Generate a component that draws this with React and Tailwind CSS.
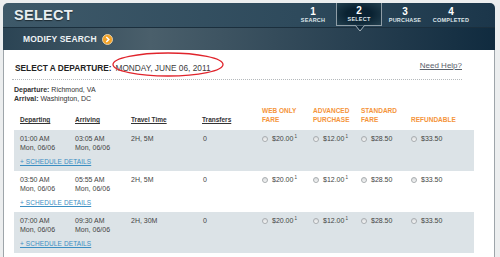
import React from "react";

const rows = [
  { dep: "01:00 AM", arr: "03:05 AM", time: "2H, 5M", shaded: true },
  { dep: "03:50 AM", arr: "05:55 AM", time: "2H, 5M", shaded: false },
  { dep: "07:00 AM", arr: "09:30 AM", time: "2H, 30M", shaded: true },
];

const steps = [
  { n: "1", label: "SEARCH" },
  { n: "2", label: "SELECT", active: true },
  { n: "3", label: "PURCHASE" },
  { n: "4", label: "COMPLETED" },
];

const cols = "grid grid-cols-[55px_56px_71px_60px_51px_48px_50px_1fr]";

const Radio = () => (
  <span className="inline-block w-[6px] h-[6px] rounded-full border border-[#a9adb0] bg-linear-to-b from-[#d9dcde] to-[#f7f7f7] mr-[4px]" />
);

const Price = ({ value, sup }) => (
  <div className="flex items-center h-[9px]">
    <Radio />
    <span>
      {value}
      {sup && <sup className="text-[4.5px] top-[-3px] ml-[1px]">1</sup>}
    </span>
  </div>
);

export default function App() {
  return (
    <div
      className="relative w-[500px] h-[257px] overflow-hidden bg-[#eceeef] pt-[3px] pl-[3px]"
      style={{ fontFamily: '"Liberation Sans", Arial, sans-serif' }}
    >
      <div className="w-[492px]">
        {/* Header */}
        <div className="rounded-t-[5px] overflow-hidden">
          <div className="relative h-[25px] flex items-start justify-between bg-linear-to-r from-[#3e5969] via-[#2e4a5c] via-60% to-[#1b364a] border-b border-[#1b2f3d]">
            <div className="pl-[11px] h-[25px] leading-[25px] text-[14.5px] font-bold text-[#e9eef1] tracking-[0.3px] [text-shadow:0_1px_1px_rgba(0,0,0,0.5)]">
              SELECT
            </div>
            <div className="flex mr-[21px]">
              {steps.map((s) => (
                <div
                  key={s.n}
                  className={
                    s.active
                      ? "relative w-[46px] h-[23px] flex flex-col items-center pt-[3px] border border-t-0 border-[#8f9da6] bg-[radial-gradient(ellipse_at_center,#0a2232_40%,#23404f)]"
                      : "w-[46px] h-[23px] flex flex-col items-center pt-[4px]"
                  }
                >
                  <span className="text-[10px] leading-[10px] font-bold text-white">
                    {s.n}
                  </span>
                  <span className="text-[5.5px] leading-[6px] font-bold text-[#dfe6ea] tracking-[0.2px]">
                    {s.label}
                  </span>
                  {s.active && (
                    <svg
                      className="absolute left-[18px] top-[22px]"
                      width="10"
                      height="8"
                      viewBox="0 0 10 8"
                    >
                      <path d="M0.5 0.5 L5 6 L9.5 0.5 Z" fill="#0d2638" />
                      <path
                        d="M0.5 0.5 L5 6 L9.5 0.5"
                        fill="none"
                        stroke="#aab6bd"
                        strokeWidth="1"
                      />
                    </svg>
                  )}
                </div>
              ))}
            </div>
          </div>
          <div className="h-[22px] flex items-center pl-[20px] bg-linear-to-r from-[#2b4454] via-[#4a5f6b] via-30% to-[#102b3f]">
            <span className="text-[8.5px] font-bold text-[#eef2f4] tracking-[0.2px]">
              MODIFY SEARCH
            </span>
            <svg className="ml-[5px]" width="11" height="11" viewBox="0 0 11 11">
              <circle cx="5.5" cy="5.5" r="5" fill="#f2a126" stroke="#f8e3c0" strokeWidth="0.8" />
              <path d="M4.3 3 L6.8 5.5 L4.3 8" fill="none" stroke="#fff" strokeWidth="1.5" />
            </svg>
          </div>
        </div>

        {/* Content */}
        <div className="bg-white border-x border-[#9ea5aa] h-[210px] text-[#3a3a3a]">
          <div className="ml-[8px] w-[450px]">
            <div className="h-[29px] pt-[10px] flex items-start justify-between">
              <div className="pl-[3px] leading-[12px] text-[#222]">
                <span className="text-[8.3px] font-bold">SELECT A DEPARTURE:</span>
                <span className="ml-[4px] text-[8.3px] text-[#3b3b3b]">MONDAY, JUNE 06, 2011</span>
              </div>
              <a className="text-[8px] leading-[12px] text-[#59606a] underline">
                Need Help?
              </a>
            </div>
            <div className="border-t border-dotted border-[#b5b9bc]" />
            <div className="mt-[5px] pl-[2px] text-[7px] leading-[9px] text-[#333]">
              <div>
                <b>Departure:</b> Richmond, VA
              </div>
              <div>
                <b>Arrival:</b> Washington, DC
              </div>
            </div>
          </div>

          {/* Table */}
          <div className="ml-[10px] w-[460px] mt-[3px]">
            <div className={`${cols} pl-[6px] h-[18px] mb-[6px] items-end text-[6.5px] leading-[9px] font-bold`}>
              <span className="underline text-[#333]">Departing</span>
              <span className="underline text-[#333]">Arriving</span>
              <span className="underline text-[#333]">Travel Time</span>
              <span className="underline text-[#333]">Transfers</span>
              <span className="text-[#f5943a]">
                WEB ONLY
                <br />
                FARE
              </span>
              <span className="text-[#f5943a]">
                ADVANCED
                <br />
                PURCHASE
              </span>
              <span className="text-[#f5943a]">
                STANDARD
                <br />
                FARE
              </span>
              <span className="text-[#f5943a]">REFUNDABLE</span>
            </div>

            {rows.map((r, i) => (
              <div
                key={i}
                className={`h-[41px] pt-[4px] pl-[6px] ${r.shaded ? "bg-[#dce3e7]" : "bg-white"}`}
              >
                <div className={`${cols} text-[7px] leading-[9px] text-[#444]`}>
                  <div>
                    <div>{r.dep}</div>
                    <div>Mon, 06/06</div>
                  </div>
                  <div>
                    <div>{r.arr}</div>
                    <div>Mon, 06/06</div>
                  </div>
                  <div>{r.time}</div>
                  <div className="pl-[1px]">0</div>
                  <Price value="$20.00" sup />
                  <Price value="$12.00" sup />
                  <Price value="$28.50" />
                  <Price value="$33.50" />
                </div>
                <a className="block mt-[4.5px] text-[6.5px] leading-[9px] text-[#3b8ec2] underline tracking-[0.1px]">
                  + SCHEDULE DETAILS
                </a>
              </div>
            ))}
          </div>
        </div>
      </div>

      {/* red marker circle */}
      <svg
        className="absolute left-[110px] top-[51px]"
        width="116"
        height="27"
        viewBox="0 0 116 27"
      >
        <ellipse cx="58" cy="13.5" rx="55" ry="11.5" fill="none" stroke="#e0242c" strokeWidth="1.3" />
      </svg>
    </div>
  );
}
